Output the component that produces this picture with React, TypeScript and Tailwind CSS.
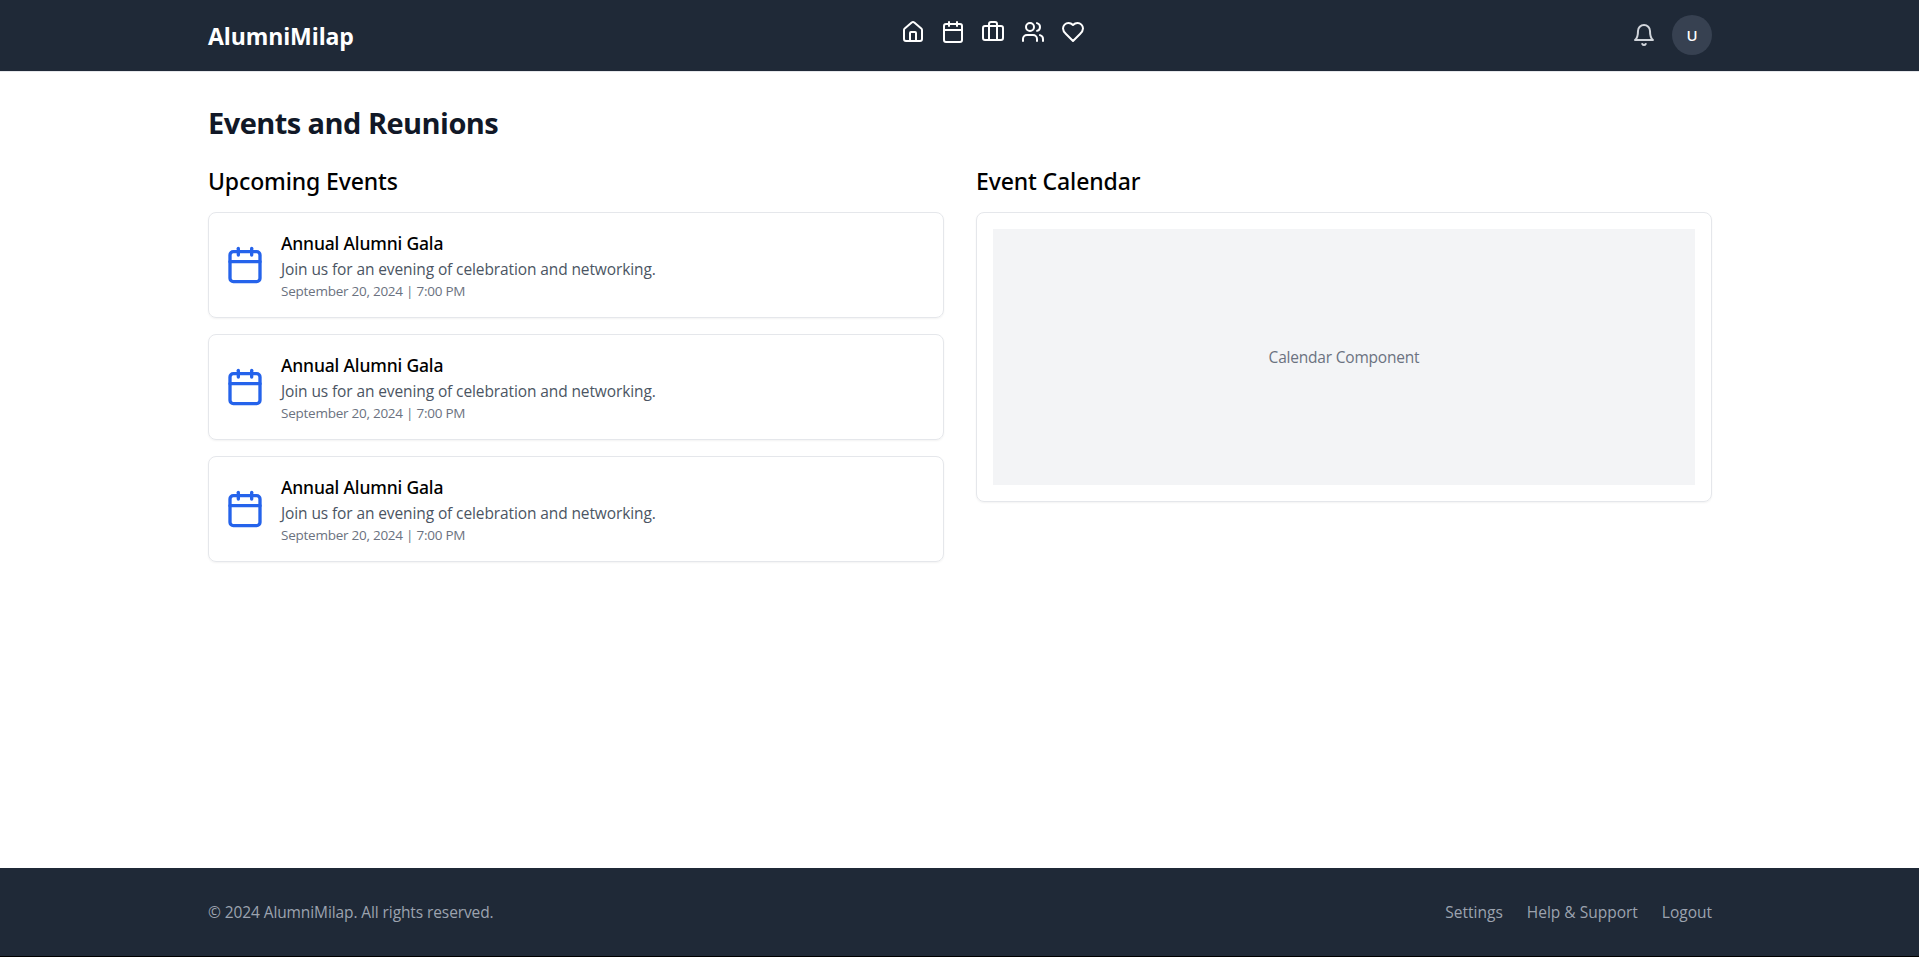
import type { ReactNode } from "react";
import { House, Calendar, Briefcase, Users } from "lucide-react";

const events = [1, 2, 3].map((id) => ({
  id,
  title: "Annual Alumni Gala",
  description: "Join us for an evening of celebration and networking.",
  date: "September 20, 2024 | 7:00 PM",
}));

function Glyph({ children, className = "" }: { children: ReactNode; className?: string }) {
  return (
    <svg
      className={`size-6 ${className}`}
      viewBox="0 0 24 24"
      fill="none"
      stroke="currentColor"
      strokeWidth="2"
      strokeLinecap="round"
      strokeLinejoin="round"
    >
      {children}
    </svg>
  );
}

function SectionTitle({ children }: { children: ReactNode }) {
  return (
    <h2 className="mb-[15px] pt-px font-['Noto_Sans',sans-serif] text-[23px] leading-8 font-medium tracking-[-0.13px]">
      {children}
    </h2>
  );
}

function Header() {
  return (
    <header className="border-b border-gray-200 bg-[#1f2937] text-white">
      <div className="mx-auto flex h-[71px] max-w-[1537px] items-center justify-between pr-4 pl-[17px]">
        <div className="w-[200px] text-[23px] font-bold tracking-[-0.1px]">AlumniMilap</div>
        <nav className="flex gap-4 pb-[7px] pl-[66px]">
          <House />
          <Calendar />
          <Briefcase />
          <Users />
          <Glyph>
            <path d="M19 14c1.49-1.46 3-3.21 3-5.5A5.5 5.5 0 0 0 16.5 3c-1.76 0-3 .5-4.5 2-1.5-1.5-2.74-2-4.5-2A5.5 5.5 0 0 0 2 8.5c0 2.3 1.5 4.05 3 5.5l7 7Z" />
          </Glyph>
        </nav>
        <div className="flex w-[200px] items-center justify-end gap-4 pb-px">
          <Glyph className="text-[#d1d5db]">
            <path d="M6 8a6 6 0 0 1 12 0c0 7 3 9 3 9H3s3-2 3-9" />
            <path d="M10.3 21a1.94 1.94 0 0 0 3.4 0" />
          </Glyph>
          <div className="flex size-10 items-center justify-center rounded-full bg-[#374151] font-['Noto_Sans',sans-serif] text-[15px] font-medium">
            U
          </div>
        </div>
      </div>
    </header>
  );
}

export default function App() {
  return (
    <div className="flex h-[957px] flex-col overflow-hidden border-b border-black bg-white font-['Open_Sans','Noto_Sans',sans-serif] text-[15.5px] leading-6 text-black">
      <Header />
      <main className="mx-auto w-full max-w-[1537px] flex-1 pt-[33px] pr-4 pl-[17px]">
        <h1 className="mb-[23px] text-[29px] leading-9 font-bold tracking-[-0.55px] text-[#111827]">
          Events and Reunions
        </h1>
        <div className="grid grid-cols-2 gap-8">
          <section>
            <SectionTitle>Upcoming Events</SectionTitle>
            <div className="flex flex-col gap-4">
              {events.map((event) => (
                <article
                  key={event.id}
                  className="flex items-center gap-4 rounded-lg border border-[#e5e7eb] p-4 shadow-xs"
                >
                  <Calendar className="size-10 text-[#2563eb]" />
                  <div>
                    <h3 className="font-['Noto_Sans',sans-serif] text-[17.5px] leading-7 font-medium tracking-[-0.16px]">
                      {event.title}
                    </h3>
                    <p className="tracking-[-0.11px] text-[#4b5563]">{event.description}</p>
                    <p className="text-[13.5px] leading-5 tracking-[-0.25px] text-[#6b7280]">{event.date}</p>
                  </div>
                </article>
              ))}
            </div>
          </section>
          <section>
            <SectionTitle>Event Calendar</SectionTitle>
            <div className="rounded-lg border border-[#e5e7eb] p-4 shadow-xs">
              <div className="flex h-64 items-center justify-center bg-[#f3f4f6] tracking-[-0.2px] text-[#6b7280]">
                Calendar Component
              </div>
            </div>
          </section>
        </div>
      </main>
      <footer className="bg-[#1f2937] py-8 text-[#9ca3af]">
        <div className="mx-auto flex max-w-[1537px] justify-between pr-4 pl-[17px]">
          <p className="tracking-[-0.1px]">© 2024 AlumniMilap. All rights reserved.</p>
          <div className="flex gap-6">
            <a>Settings</a>
            <a>Help &amp; Support</a>
            <a>Logout</a>
          </div>
        </div>
      </footer>
    </div>
  );
}
